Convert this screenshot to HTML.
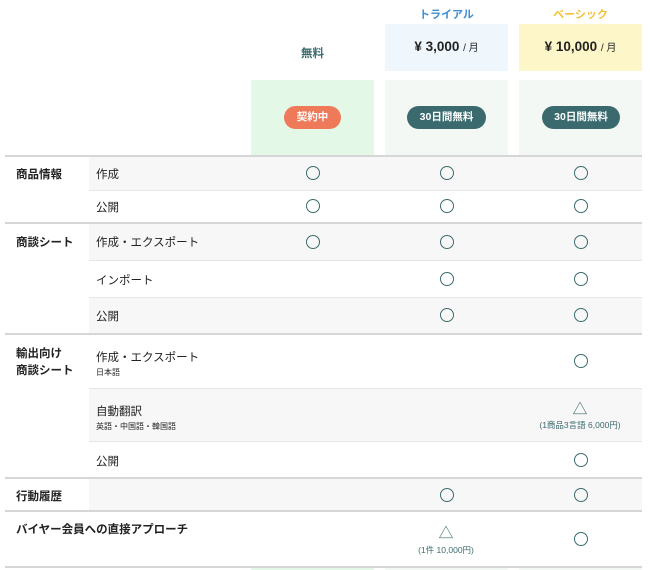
<!DOCTYPE html>
<html><head><meta charset="utf-8"><style>
*{margin:0;padding:0;box-sizing:border-box}
body{width:650px;height:570px;background:#fff;font-family:"Liberation Sans","Noto Sans CJK JP",sans-serif;position:relative;overflow:hidden;color:#222}
.a{position:absolute}
.lbl{font-size:11px;font-weight:bold;text-align:center}
.box{position:absolute;width:123px}
.pill{position:absolute;height:23px;border-radius:12px;color:#fff;font-size:10.5px;font-weight:bold;line-height:23px;text-align:center}
.g{position:absolute;left:89px;width:553px;background:#f7f7f7}
.hl{position:absolute;left:5px;width:637px;height:2px;background:#d6d6d6}
.ll{position:absolute;left:89px;width:553px;height:1px;background:#e6e6e6}
.m{position:absolute;left:16px;font-size:11.5px;font-weight:bold}
.s{position:absolute;left:96px;font-size:11.5px}
.sm{font-size:8px;display:block;margin-top:2px}
.c{position:absolute;width:14px;height:14px;border:1.5px solid #3d6b6e;border-radius:50%}
.t{position:absolute;color:#3d6b6e;font-size:15px;line-height:15px;text-align:center;width:100px}
.n{position:absolute;color:#3d6b6e;font-size:8.5px;text-align:center;width:120px}
</style></head><body>
<div class="a lbl" style="left:385px;top:6px;width:123px;color:#3f8fd2">トライアル</div>
<div class="a lbl" style="left:519px;top:6px;width:123px;color:#f2c33a">ベーシック</div>
<div class="a lbl" style="left:251px;top:45px;width:123px;color:#3a6a6e;font-size:11.5px">無料</div>
<div class="box" style="left:385px;top:24px;height:47px;background:#eff7fd"></div>
<div class="box" style="left:519px;top:24px;height:47px;background:#fdf6c8"></div>
<div class="a" style="left:385px;top:39px;width:123px;text-align:center;font-size:13.5px;font-weight:bold">¥ 3,000 <span style="font-size:10px;font-weight:normal">/ 月</span></div>
<div class="a" style="left:519px;top:39px;width:123px;text-align:center;font-size:13.5px;font-weight:bold">¥ 10,000 <span style="font-size:10px;font-weight:normal">/ 月</span></div>
<div class="box" style="left:251px;top:80px;height:76px;background:#e3f8e6"></div>
<div class="box" style="left:385px;top:80px;height:76px;background:#f4f8f5"></div>
<div class="box" style="left:519px;top:80px;height:76px;background:#f4f8f5"></div>
<div class="pill" style="left:284px;top:106px;width:57px;background:#ee7a5a">契約中</div>
<div class="pill" style="left:407px;top:106px;width:79px;background:#3a6a6e">30日間無料</div>
<div class="pill" style="left:542px;top:106px;width:78px;background:#3a6a6e">30日間無料</div>
<div class="box" style="left:251px;top:567px;height:3px;background:#e3f8e6"></div>
<div class="box" style="left:385px;top:567px;height:3px;background:#f4f8f5"></div>
<div class="box" style="left:519px;top:567px;height:3px;background:#f4f8f5"></div>

<div class="g" style="top:156px;height:34px"></div>
<div class="g" style="top:222px;height:38px"></div>
<div class="g" style="top:297px;height:36px"></div>
<div class="g" style="top:388px;height:53px"></div>
<div class="g" style="top:477px;height:34px"></div>

<div class="hl" style="top:155px"></div>
<div class="ll" style="top:190px"></div>
<div class="hl" style="top:222px"></div>
<div class="ll" style="top:260px"></div>
<div class="ll" style="top:297px"></div>
<div class="hl" style="top:333px"></div>
<div class="ll" style="top:388px"></div>
<div class="ll" style="top:441px"></div>
<div class="hl" style="top:477px"></div>
<div class="hl" style="top:510px"></div>
<div class="hl" style="top:566px"></div>

<div class="m" style="top:166px">商品情報</div>
<div class="m" style="top:234px">商談シート</div>
<div class="m" style="top:346px;line-height:17px">輸出向け<br>商談シート</div>
<div class="m" style="top:488px">行動履歴</div>
<div class="m" style="top:521px">バイヤー会員への直接アプローチ</div>

<div class="s" style="top:166px">作成</div>
<div class="s" style="top:199px">公開</div>
<div class="s" style="top:234px">作成・エクスポート</div>
<div class="s" style="top:272px">インポート</div>
<div class="s" style="top:308px">公開</div>
<div class="s" style="top:349px">作成・エクスポート<span class="sm">日本語</span></div>
<div class="s" style="top:403px">自動翻訳<span class="sm">英語・中国語・韓国語</span></div>
<div class="s" style="top:453px">公開</div>

<div class="c" style="left:306px;top:166px"></div><div class="c" style="left:440px;top:166px"></div><div class="c" style="left:574px;top:166px"></div>
<div class="c" style="left:306px;top:199px"></div><div class="c" style="left:440px;top:199px"></div><div class="c" style="left:574px;top:199px"></div>
<div class="c" style="left:306px;top:235px"></div><div class="c" style="left:440px;top:235px"></div><div class="c" style="left:574px;top:235px"></div>
<div class="c" style="left:440px;top:272px"></div><div class="c" style="left:574px;top:272px"></div>
<div class="c" style="left:440px;top:308px"></div><div class="c" style="left:574px;top:308px"></div>
<div class="c" style="left:574px;top:354px"></div>
<div class="t" style="left:530px;top:402px">△</div>
<div class="n" style="left:520px;top:419px">(1商品3言語 6,000円)</div>
<div class="c" style="left:574px;top:453px"></div>
<div class="c" style="left:440px;top:488px"></div><div class="c" style="left:574px;top:488px"></div>
<div class="t" style="left:396px;top:526px">△</div>
<div class="n" style="left:386px;top:544px">(1件 10,000円)</div>
<div class="c" style="left:574px;top:532px"></div>
</body></html>
